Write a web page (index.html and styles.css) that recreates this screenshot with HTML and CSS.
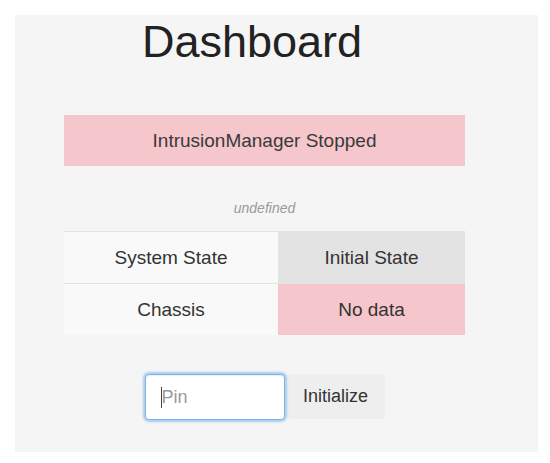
FILE: index.html
```html
<!DOCTYPE html>
<html>
<head>
<meta charset="utf-8">
<link rel="stylesheet" href="styles.css">
</head>
<body>
<div class="panel">
  <div class="content">
    <h1 class="title">Dashboard</h1>
    <div class="banner">IntrusionManager Stopped</div>
    <div class="note">undefined</div>
    <table class="status">
      <tr>
        <td class="label">System State</td>
        <td class="value gray">Initial State</td>
      </tr>
      <tr>
        <td class="label">Chassis</td>
        <td class="value pink">No data</td>
      </tr>
    </table>
    <div class="form">
      <div class="field">
        <input class="pin" type="text" placeholder="Pin">
        <span class="caret"></span>
      </div>
      <button class="btn">Initialize</button>
    </div>
  </div>
</div>
</body>
</html>
```

FILE: styles.css
```css
html, body {
  margin: 0;
  padding: 0;
  background: #ffffff;
}
body {
  font-family: "Liberation Sans", Arial, sans-serif;
  color: #333333;
}
.panel {
  margin: 15px 12px 0 15px;
  height: 437px;
  background: #f5f5f5;
  padding-top: 2px;
  box-sizing: border-box;
}
.content {
  margin-left: 49px;
  width: 401px;
  display: flex;
  flex-direction: column;
}
.title {
  margin: 0;
  padding-right: 25px;
  font-size: 45px;
  line-height: 50px;
  font-weight: normal;
  text-align: center;
  color: #222222;
}
.banner {
  margin-top: 48px;
  height: 51px;
  background: #f5c6cb;
  display: flex;
  align-items: center;
  justify-content: center;
  font-size: 19px;
  color: #3a3a3a;
}
.note {
  margin-top: 32px;
  height: 20px;
  line-height: 20px;
  text-align: center;
  font-style: italic;
  font-size: 14px;
  color: #9a9a9a;
}
.status {
  margin-top: 13px;
  width: 401px;
  border-collapse: collapse;
  font-size: 19px;
}
.status td {
  height: 51px;
  padding: 0;
  text-align: center;
  border-top: 1px solid #e2e2e2;
}
.label {
  width: 214px;
  background: #f9f9f9;
}
.gray {
  background: #e3e3e3;
}
.pink {
  background: #f5c6cb;
}
.form {
  margin-top: 39px;
  display: flex;
  justify-content: center;
  gap: 2px;
}
.field {
  position: relative;
}
.pin {
  display: block;
  width: 140px;
  height: 46px;
  box-sizing: border-box;
  border: 1px solid #7ab6ea;
  border-radius: 4px;
  box-shadow: inset 0 1px 1px rgba(0,0,0,.075), 0 0 2px 2px rgba(130,185,238,.65);
  padding: 0 16px;
  font-family: "Liberation Sans", Arial, sans-serif;
  font-size: 18px;
  color: #555;
  background: #ffffff;
  outline: none;
}
.pin::placeholder {
  color: #999999;
}
.caret {
  position: absolute;
  left: 16px;
  top: 13px;
  width: 1px;
  height: 21px;
  background: #444444;
}
.btn {
  width: 98px;
  height: 45px;
  border: none;
  border-radius: 4px;
  background: #eeeeee;
  font-family: "Liberation Sans", Arial, sans-serif;
  font-size: 18px;
  color: #333333;
  padding: 0;
}
```
